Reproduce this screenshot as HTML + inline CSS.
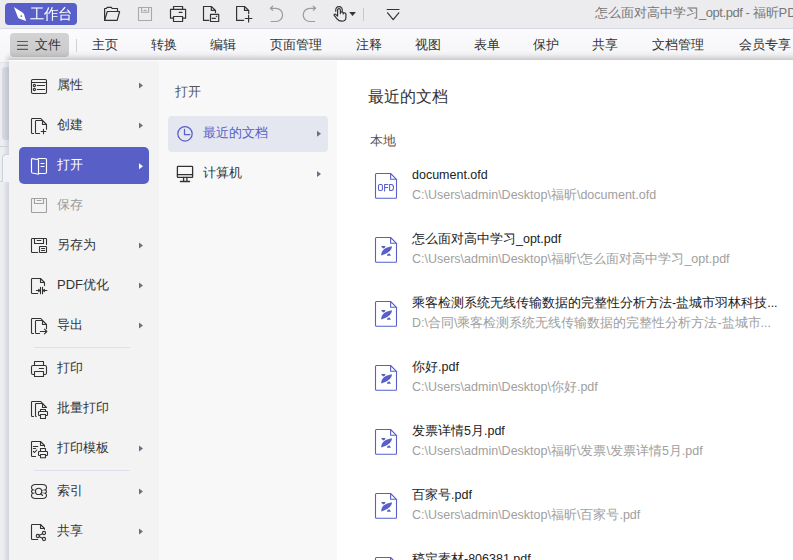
<!DOCTYPE html>
<html><head><meta charset="utf-8">
<style>
*{margin:0;padding:0;box-sizing:border-box}
html,body{width:793px;height:560px;overflow:hidden;background:#fff;font-family:"Liberation Sans",sans-serif;color:#333}
.a{position:absolute;white-space:nowrap}
#top{left:0;top:0;width:793px;height:29px;background:#ececee;border-bottom:1px solid #d6d9e4}
#wb{left:5px;top:3px;width:72px;height:22px;background:#585fc8;border-radius:4px}
#tabs{left:0;top:29px;width:793px;height:33px;background:linear-gradient(#fbfbfd 0%,#f5f5f7 100%)}
.tab{top:37px;font-size:13px;line-height:16px;color:#333}
#doc{left:0;top:62px;width:793px;height:498px;background:#edeef2;border-top:1px solid #e4e4e8}
#m1{left:9px;top:60px;width:150px;height:500px;background:#f3f3f3}
#m2{left:159px;top:60px;width:178px;height:500px;background:#f8f8f8}
#m3{left:337px;top:60px;width:456px;height:500px;background:#fff}
.t{font-size:13px;line-height:16px;color:#333}
.nm{font-size:12.5px;line-height:15px;color:#222}
.pt{font-size:12.5px;line-height:15px;color:#a0a0a0}
</style></head><body>
<div id="top" class="a"></div>
<div id="wb" class="a"></div>
<span class="a" style="left:30px;top:5px;font-size:14px;line-height:16px;color:#fff;transform:scaleY(1.04);transform-origin:0 0">工作台</span>
<span class="a" style="left:595px;top:5px;font-size:13px;line-height:16px;color:#777">怎么面对高中学习<span style="letter-spacing:-0.45px">_opt.pdf - </span>福昕PDF</span>

<div id="tabs" class="a"></div>
<div class="a" style="left:9.5px;top:33px;width:59px;height:23.5px;background:linear-gradient(#d3d3d3,#c9c9c9);border-radius:4px"></div>
<span class="a tab" style="left:35px">文件</span>
<div class="a" style="left:76px;top:39px;width:1px;height:13px;background:#d0d0d0"></div>
<span class="a tab" style="left:92px">主页</span>
<span class="a tab" style="left:151px">转换</span>
<span class="a tab" style="left:210px">编辑</span>
<span class="a tab" style="left:270px">页面管理</span>
<span class="a tab" style="left:356px">注释</span>
<span class="a tab" style="left:415px">视图</span>
<span class="a tab" style="left:474px">表单</span>
<span class="a tab" style="left:533px">保护</span>
<span class="a tab" style="left:592px">共享</span>
<span class="a tab" style="left:652px">文档管理</span>
<span class="a tab" style="left:739px">会员专享</span>

<div id="doc" class="a"></div>
<div class="a" style="left:2px;top:67px;width:8px;height:73px;background:#d7dae2;border-radius:3px"></div>
<div class="a" style="left:3px;top:59px;width:6px;height:501px;background:linear-gradient(to right,rgba(30,40,80,0),rgba(30,40,80,.13));-webkit-mask-image:linear-gradient(transparent,#000 4px);mask-image:linear-gradient(transparent,#000 4px)"></div>
<div class="a" style="left:4px;top:51px;width:789px;height:9px;background:linear-gradient(rgba(0,0,10,0),rgba(0,0,10,.03) 40%,rgba(0,0,10,.17));-webkit-mask-image:linear-gradient(to right,transparent,#000 6px);mask-image:linear-gradient(to right,transparent,#000 6px)"></div>
<div class="a" style="left:0;top:146px;width:9px;height:1px;background:#cdd0d9"></div>
<div class="a" style="left:1.5px;top:154px;width:8px;height:28px;border-top:1px solid #cdd0d9;border-left:1px solid #cdd0d9;background:#f2f3f6;border-radius:4px 0 0 0"></div>
<div class="a" style="left:0;top:181px;width:2px;height:1px;background:#cdd0d9"></div>

<div id="m1" class="a"></div>
<div id="m2" class="a"></div>
<div id="m3" class="a"></div>
<div class="a" style="left:9px;top:60px;width:784px;height:1px;background:#fdfdfd"></div>

<!-- left menu -->
<div class="a" style="left:19px;top:147px;width:130px;height:37px;background:#585fc7;border-radius:5px"></div>
<span class="a t" style="left:57px;top:77px">属性</span>
<span class="a t" style="left:57px;top:117px">创建</span>
<span class="a t" style="left:57px;top:157px;color:#fff">打开</span>
<span class="a t" style="left:57px;top:197px;color:#9a9a9a">保存</span>
<span class="a t" style="left:57px;top:237px">另存为</span>
<span class="a t" style="left:57px;top:277px">PDF优化</span>
<span class="a t" style="left:57px;top:317px">导出</span>
<div class="a" style="left:34px;top:347px;width:96px;height:1px;background:#dde1ea"></div>
<span class="a t" style="left:57px;top:360px">打印</span>
<span class="a t" style="left:57px;top:400px">批量打印</span>
<span class="a t" style="left:57px;top:440px">打印模板</span>
<div class="a" style="left:34px;top:470px;width:96px;height:1px;background:#dde1ea"></div>
<span class="a t" style="left:57px;top:483px">索引</span>
<span class="a t" style="left:57px;top:523px">共享</span>

<!-- second panel -->
<span class="a t" style="left:175px;top:84px;color:#555">打开</span>
<div class="a" style="left:168px;top:116px;width:160px;height:36px;background:#e4e7f0;border-radius:4px"></div>
<span class="a t" style="left:203px;top:125px;color:#585fc7">最近的文档</span>
<span class="a t" style="left:203px;top:165px">计算机</span>

<!-- right panel -->
<span class="a" style="left:368px;top:88px;font-size:16px;line-height:18px;color:#333">最近的文档</span>
<span class="a t" style="left:370px;top:133px;color:#555">本地</span>

<span class="a nm" style="left:412px;top:168px">document.ofd</span>
<span class="a pt" style="left:412px;top:188px">C:\Users\admin\Desktop\福昕\document.ofd</span>
<span class="a nm" style="left:412px;top:232px">怎么面对高中学习_opt.pdf</span>
<span class="a pt" style="left:412px;top:252px">C:\Users\admin\Desktop\福昕\怎么面对高中学习_opt.pdf</span>
<span class="a nm" style="left:412px;top:296px">乘客检测系统无线传输数据的完整性分析方法-盐城市羽林科技...</span>
<span class="a pt" style="left:412px;top:316px">D:\合同\乘客检测系统无线传输数据的完整性分析方法-盐城市...</span>
<span class="a nm" style="left:412px;top:360px">你好.pdf</span>
<span class="a pt" style="left:412px;top:380px">C:\Users\admin\Desktop\你好.pdf</span>
<span class="a nm" style="left:412px;top:424px">发票详情5月.pdf</span>
<span class="a pt" style="left:412px;top:444px">C:\Users\admin\Desktop\福昕\发票\发票详情5月.pdf</span>
<span class="a nm" style="left:412px;top:488px">百家号.pdf</span>
<span class="a pt" style="left:412px;top:508px">C:\Users\admin\Desktop\福昕\百家号.pdf</span>
<span class="a nm" style="left:412px;top:552px">稿定素材-806381.pdf</span>

<svg class="a" style="left:0;top:0" width="793" height="560" viewBox="0 0 793 560" fill="none" stroke-linecap="round" stroke-linejoin="round">

<!-- wb logo -->
<path d="M13.8 7 L22.6 12.6 Q24.6 14.2 24.6 16.2 L26.1 21 L21 19.3 Q18.6 18.6 18 17.4 Q16.3 12.8 13.8 7 Z" fill="#fff"/>
<circle cx="21.3" cy="16.1" r="0.85" fill="#585fc8"/>
<!-- toolbar icons -->
<g stroke="#333" stroke-width="1.2">
  <path d="M104.6 20.4 V8.5 H106.4 L107.1 7.4 H111.4 L112.1 8.5 H117.5 V11.4"/>
  <path d="M104.6 20.4 L107.3 11.5 H119.6 L117.2 20.4 Z"/>
</g>
<g stroke="#a8a8a8" stroke-width="1.1">
  <rect x="138.5" y="7.5" width="13" height="13"/>
  <path d="M141.6 7.5 V12.2 H148.6 V7.5 M144 10.4 H146.2"/>
</g>
<g stroke="#333" stroke-width="1.2">
  <path d="M173.5 9.4 V6.5 H182.6 V9.4"/>
  <path d="M173.5 18.2 H170.5 V9.4 H185.6 V18.2 H182.6"/>
  <rect x="173.5" y="16.5" width="9.1" height="5"/>
  <path d="M179.2 12.4 H182"/>
</g>
<g stroke="#333" stroke-width="1.2">
  <path d="M208.8 20.4 H203.5 V6.5 H211.3 L215.5 10.4 V12.6 M211.3 6.5 V10.4 H215.5"/>
  <rect x="210.5" y="14.4" width="8.2" height="7.1"/>
  <path d="M212.2 18.3 H215.4"/>
  <circle cx="216.4" cy="16.3" r="0.4" fill="#333" stroke-width="0.6"/>
</g>
<g stroke="#333" stroke-width="1.2">
  <path d="M243.6 20.4 H236.6 V6.5 H244.5 L248.7 10.4 V13.6 M244.5 6.5 V10.4 H248.7"/>
  <path d="M248.6 15.4 V21.9 M245.2 18.5 H251.9"/>
</g>
<g stroke="#9c9c9c" stroke-width="1.2">
  <path d="M272.7 6.2 L270.4 8.3 L272.7 10.4 M270.6 8.3 H276 A6.6 6.6 0 0 1 276 21.5 H271.1"/>
  <path d="M313.3 6.2 L315.6 8.3 L313.3 10.4 M315.4 8.3 H309.8 A6.6 6.6 0 0 0 309.8 21.5 H314.7"/>
</g>
<g stroke="#333" stroke-width="1.2">
  <path d="M335.7 11.2 Q335.5 6.6 339 6.6 Q342.5 6.6 342.3 11.2"/>
  <path d="M337.6 16 V9.9 Q337.6 8.6 339 8.6 Q340.4 8.6 340.4 9.9 V13.6 M340.4 12.4 Q342.4 11.4 343.2 12.8 V14 M343.2 13.2 Q345.6 12.4 345.9 14.2 V17.4 Q345.9 21.2 341.6 21.2 Q338.8 21.2 337.2 19.2 L334.2 15.4 Q333.6 14 335.3 14.1 L337.6 16"/>
</g>
<path d="M349.2 12 H355.9 L352.55 16.1 Z" fill="#333"/>
<path d="M363.5 8.2 V20.6" stroke="#c8c8c8" stroke-width="1"/>
<path d="M387.1 9.5 H399 M387.6 12.8 L393.2 19.6 L398.8 12.8" stroke="#333" stroke-width="1.2"/>

<!-- menu hamburger -->
<path d="M17.5 41.5 H27.5 M17.5 45.4 H27.5 M17.5 49.4 H27.5" stroke="#5a5a5a" stroke-width="1.1"/>

<!-- left menu icons -->
<g stroke="#333" stroke-width="1.1">
  <!-- 属性 -->
  <rect x="31.5" y="79.5" width="15" height="14" rx="1.2"/>
  <path d="M31.5 82.5 H46.5 M37.2 85.5 H44.6 M37.2 89.5 H44.6"/>
  <circle cx="34.4" cy="85.5" r="1.1"/><circle cx="34.4" cy="89.5" r="1.1"/>
  <!-- 创建 -->
  <path d="M33.6 133.5 H32.3 Q31.5 133.5 31.5 132.7 V119.3 Q31.5 118.5 32.3 118.5 H40.8 L42.3 120.2"/>
  <path d="M39.6 133.5 H36.3 Q35.5 133.5 35.5 132.7 V121.3 Q35.5 120.5 36.3 120.5 H42.5 L46.5 124.5 V129.2 M42.5 120.5 V124.5 H46.5"/>
  <path d="M43.5 129.2 V133.8 M41.2 131.5 H45.8"/>
  <!-- 保存 -->
  <g stroke="#a0a0a0"><rect x="31.5" y="198.5" width="15" height="14" rx="0.6"/><path d="M34.5 198.5 V203.5 H43.5 V198.5 M37.2 200.5 H40.9"/></g>
  <!-- 另存为 -->
  <path d="M37.7 252.5 H32.2 Q31.5 252.5 31.5 251.8 V239.2 Q31.5 238.5 32.2 238.5 H45.8 Q46.5 238.5 46.5 239.2 V244.5"/>
  <path d="M34.5 238.5 V243.5 H43.5 V238.5 M37.2 240.5 H40.9"/>
  <rect x="39.5" y="246.5" width="7" height="6" rx="0.4"/>
  <path d="M41.5 248.5 H44.6 M41.5 250.5 H44.6"/>
  <!-- PDF优化 -->
  <path d="M37.7 293.5 H32.2 Q31.5 293.5 31.5 292.8 V279.2 Q31.5 278.5 32.2 278.5 H40.5 L44.5 282.5 V285.6 M40.5 278.5 V282.5 H44.5"/>
  <path d="M40.5 287.2 V293.8 M42.5 287.2 V293.8 M36.3 290.5 H40.3 M42.7 290.5 H46.9 M38.6 289.3 L39.9 290.5 L38.6 291.7 M44.5 289.3 L43.2 290.5 L44.5 291.7"/>
  <!-- 导出 -->
  <path d="M33.6 333.5 H32.3 Q31.5 333.5 31.5 332.7 V319.3 Q31.5 318.5 32.3 318.5 H40.8 L42.3 320.2"/>
  <path d="M39.6 333.5 H36.3 Q35.5 333.5 35.5 332.7 V321.3 Q35.5 320.5 36.3 320.5 H42.5 L46.5 324.5 V328.8 M42.5 320.5 V324.5 H46.5"/>
  <path d="M40.3 331.5 H46.8 M44.5 329.2 L46.8 331.5 L44.5 333.8"/>
  <!-- 打印 -->
  <path d="M34.5 365.5 V361.5 H43.5 V365.5"/>
  <path d="M34.5 374.5 H33 Q31.5 374.5 31.5 373 V367 Q31.5 365.5 33 365.5 H45 Q46.5 365.5 46.5 367 V373 Q46.5 374.5 45 374.5 H43.5"/>
  <rect x="34.5" y="371.5" width="9" height="5"/>
  <path d="M39.3 368.5 H43.6"/>
  <!-- 批量打印 -->
  <path d="M33.6 416.5 H32.3 Q31.5 416.5 31.5 415.7 V402.3 Q31.5 401.5 32.3 401.5 H40.8 L42.3 403.2"/>
  <path d="M36.3 416.5 Q35.5 416.5 35.5 415.7 V404.3 Q35.5 403.5 36.3 403.5 H42.5 L46.5 407.5 M42.5 403.5 V407.5 H46.5"/>
  <path d="M40.5 411.5 V409.5 H45.5 V411.5 M40.5 415.5 H39.2 Q38.5 415.5 38.5 414.8 V412.2 Q38.5 411.5 39.2 411.5 H46.8 Q47.5 411.5 47.5 412.2 V414.8 Q47.5 415.5 46.8 415.5 H45.5"/><rect x="40.5" y="414.5" width="5" height="4"/>
  <!-- 打印模板 -->
  <path d="M35.6 456.5 H32.2 Q31.5 456.5 31.5 455.8 V442.2 Q31.5 441.5 32.2 441.5 H40.5 L44.5 445.5 V446.7 M40.5 441.5 V445.5 H44.5"/>
  <path d="M33.4 446.5 H37.8 M33.4 448.5 H35.6 M33.4 451.3 L34.6 452.5 L36.8 450"/>
  <path d="M40.5 451.5 V448.5 H45.5 V451.5 M40.5 455.5 H39.2 Q38.5 455.5 38.5 454.8 V452.2 Q38.5 451.5 39.2 451.5 H46.8 Q47.5 451.5 47.5 452.2 V454.8 Q47.5 455.5 46.8 455.5 H45.5"/><rect x="40.5" y="454.5" width="5" height="3.3"/>
  <!-- 索引 -->
  <path d="M35.5 484.5 H42.5 Q46.5 484.5 46.5 487.7 Q46.5 489.3 45 489.8 Q46.5 490.3 46.5 491.5 Q46.5 492.8 45 493.3 Q46.5 493.8 46.5 495.3 Q46.5 498.5 42.5 498.5 H35.5 Q31.5 498.5 31.5 495.3 Q31.5 493.8 33 493.3 Q31.5 492.8 31.5 491.5 Q31.5 490.3 33 489.8 Q31.5 489.3 31.5 487.7 Q31.5 484.5 35.5 484.5 Z"/>
  <circle cx="38.6" cy="491.4" r="3.1" fill="#f3f3f3"/>
  <path d="M40.8 493.6 L42.6 495.5"/>
  <path d="M33 489.8 Q34.2 490 35.2 490.4 M33 493.3 Q34.2 493.1 35.2 492.7 M45 489.8 Q43.6 490 42.3 490.4 M45 493.3 Q43.8 493.1 42.6 492.7" stroke-width="0.9" opacity="0.7"/>
  <!-- 共享 -->
  <path d="M37.7 539.5 H32.2 Q31.5 539.5 31.5 538.8 V525.2 Q31.5 524.5 32.2 524.5 H40.5 L44.5 528.5 V529.2 M40.5 524.5 V528.5 H44.5"/>
  <circle cx="44" cy="533" r="1.6"/><circle cx="37.8" cy="536" r="1.6"/><circle cx="44" cy="539" r="1.6"/><path d="M39.2 535.3 L42.6 533.7 M39.2 536.7 L42.6 538.3"/>
</g>
<!-- 打开 icon (white) -->
<g stroke="#fff" stroke-width="1.15">
  <path d="M38 158.5 H45.3 Q46.5 158.5 46.5 159.7 V172.3 Q46.5 173.5 45.3 173.5 H38.5"/>
  <path d="M32.4 158.6 L38.5 159.7 V174.2 L32.4 173 Q31.5 172.8 31.5 171.9 V159.5 Q31.5 158.4 32.4 158.6 Z"/>
  <path d="M41 163.5 H44 M41 166.5 H44"/>
</g>

<!-- arrows -->
<g fill="#6b6f82">
  <path d="M139 82.5 L143 85.5 L139 88.5 Z"/>
  <path d="M139 122.5 L143 125.5 L139 128.5 Z"/>
  <path d="M139 242.5 L143 245.5 L139 248.5 Z"/>
  <path d="M139 282.5 L143 285.5 L139 288.5 Z"/>
  <path d="M139 322.5 L143 325.5 L139 328.5 Z"/>
  <path d="M139 445.5 L143 448.5 L139 451.5 Z"/>
  <path d="M139 488.5 L143 491.5 L139 494.5 Z"/>
  <path d="M139 528.5 L143 531.5 L139 534.5 Z"/>
  <path d="M317 130.8 L321 133.8 L317 136.8 Z"/>
  <path d="M317 171 L321 174 L317 177 Z"/>
</g>
<path d="M139 163.3 L143 166.3 L139 169.3 Z" fill="#fff"/>

<!-- clock -->
<g stroke="#585fc7" stroke-width="1.25">
  <circle cx="185" cy="133.8" r="7.2"/>
  <path d="M184.5 129.3 V134.5 H189.8"/>
</g>
<!-- computer -->
<g stroke="#333" stroke-width="1.3">
  <rect x="177.4" y="166.4" width="15.2" height="11" rx="0.6"/>
  <path d="M177.4 174.6 H192.6 M183.6 177.4 V181.5 M186.9 177.4 V181.5 M180.4 181.5 H189.6"/>
</g>

<!-- OFD icon -->
<g transform="translate(0,173)"><path d="M376.5 0.5 H390.6 L396.5 6.3 V24.2 Q396.5 25.2 395.5 25.2 H376.5 Q375.5 25.2 375.5 24.2 V1.5 Q375.5 0.5 376.5 0.5 Z M390.6 0.5 V6.3 H396.5" stroke="#585fc7" stroke-width="1.1"/></g>
<g stroke="#585fc7" stroke-width="1.05"><rect x="378.5" y="184.4" width="3.9" height="6.1" rx="1.3"/><path d="M384.6 190.9 V184.4 H387.9 M384.6 187.5 H387.7 M389.6 184.4 V190.5 H391.4 Q393.5 190.5 393.5 187.45 Q393.5 184.4 391.4 184.4 Z"/></g>

<g transform="translate(0,237)"><path d="M376.5 0.5 H390.6 L396.5 6.3 V24.2 Q396.5 25.2 395.5 25.2 H376.5 Q375.5 25.2 375.5 24.2 V1.5 Q375.5 0.5 376.5 0.5 Z M390.6 0.5 V6.3 H396.5" stroke="#585fc7" stroke-width="1.1"/><path d="M381 9.1 H385.7 L384.5 11 L383 11.4 Z M381.2 18.6 C381.4 14 383 11 392 9.2 C391.8 12.5 389.5 15.8 381.2 18.6 Z M386.8 18.7 H390.9 L389.8 16.6 L387.8 16.8 Z" fill="#585fc7" stroke="none"/></g>
<g transform="translate(0,301)"><path d="M376.5 0.5 H390.6 L396.5 6.3 V24.2 Q396.5 25.2 395.5 25.2 H376.5 Q375.5 25.2 375.5 24.2 V1.5 Q375.5 0.5 376.5 0.5 Z M390.6 0.5 V6.3 H396.5" stroke="#585fc7" stroke-width="1.1"/><path d="M381 9.1 H385.7 L384.5 11 L383 11.4 Z M381.2 18.6 C381.4 14 383 11 392 9.2 C391.8 12.5 389.5 15.8 381.2 18.6 Z M386.8 18.7 H390.9 L389.8 16.6 L387.8 16.8 Z" fill="#585fc7" stroke="none"/></g>
<g transform="translate(0,365)"><path d="M376.5 0.5 H390.6 L396.5 6.3 V24.2 Q396.5 25.2 395.5 25.2 H376.5 Q375.5 25.2 375.5 24.2 V1.5 Q375.5 0.5 376.5 0.5 Z M390.6 0.5 V6.3 H396.5" stroke="#585fc7" stroke-width="1.1"/><path d="M381 9.1 H385.7 L384.5 11 L383 11.4 Z M381.2 18.6 C381.4 14 383 11 392 9.2 C391.8 12.5 389.5 15.8 381.2 18.6 Z M386.8 18.7 H390.9 L389.8 16.6 L387.8 16.8 Z" fill="#585fc7" stroke="none"/></g>
<g transform="translate(0,429)"><path d="M376.5 0.5 H390.6 L396.5 6.3 V24.2 Q396.5 25.2 395.5 25.2 H376.5 Q375.5 25.2 375.5 24.2 V1.5 Q375.5 0.5 376.5 0.5 Z M390.6 0.5 V6.3 H396.5" stroke="#585fc7" stroke-width="1.1"/><path d="M381 9.1 H385.7 L384.5 11 L383 11.4 Z M381.2 18.6 C381.4 14 383 11 392 9.2 C391.8 12.5 389.5 15.8 381.2 18.6 Z M386.8 18.7 H390.9 L389.8 16.6 L387.8 16.8 Z" fill="#585fc7" stroke="none"/></g>
<g transform="translate(0,493)"><path d="M376.5 0.5 H390.6 L396.5 6.3 V24.2 Q396.5 25.2 395.5 25.2 H376.5 Q375.5 25.2 375.5 24.2 V1.5 Q375.5 0.5 376.5 0.5 Z M390.6 0.5 V6.3 H396.5" stroke="#585fc7" stroke-width="1.1"/><path d="M381 9.1 H385.7 L384.5 11 L383 11.4 Z M381.2 18.6 C381.4 14 383 11 392 9.2 C391.8 12.5 389.5 15.8 381.2 18.6 Z M386.8 18.7 H390.9 L389.8 16.6 L387.8 16.8 Z" fill="#585fc7" stroke="none"/></g>
<g transform="translate(0,557)"><path d="M376.5 0.5 H390.6 L396.5 6.3 V24.2 Q396.5 25.2 395.5 25.2 H376.5 Q375.5 25.2 375.5 24.2 V1.5 Q375.5 0.5 376.5 0.5 Z M390.6 0.5 V6.3 H396.5" stroke="#585fc7" stroke-width="1.1"/><path d="M381 9.1 H385.7 L384.5 11 L383 11.4 Z M381.2 18.6 C381.4 14 383 11 392 9.2 C391.8 12.5 389.5 15.8 381.2 18.6 Z M386.8 18.7 H390.9 L389.8 16.6 L387.8 16.8 Z" fill="#585fc7" stroke="none"/></g>
</svg>
</body></html>
